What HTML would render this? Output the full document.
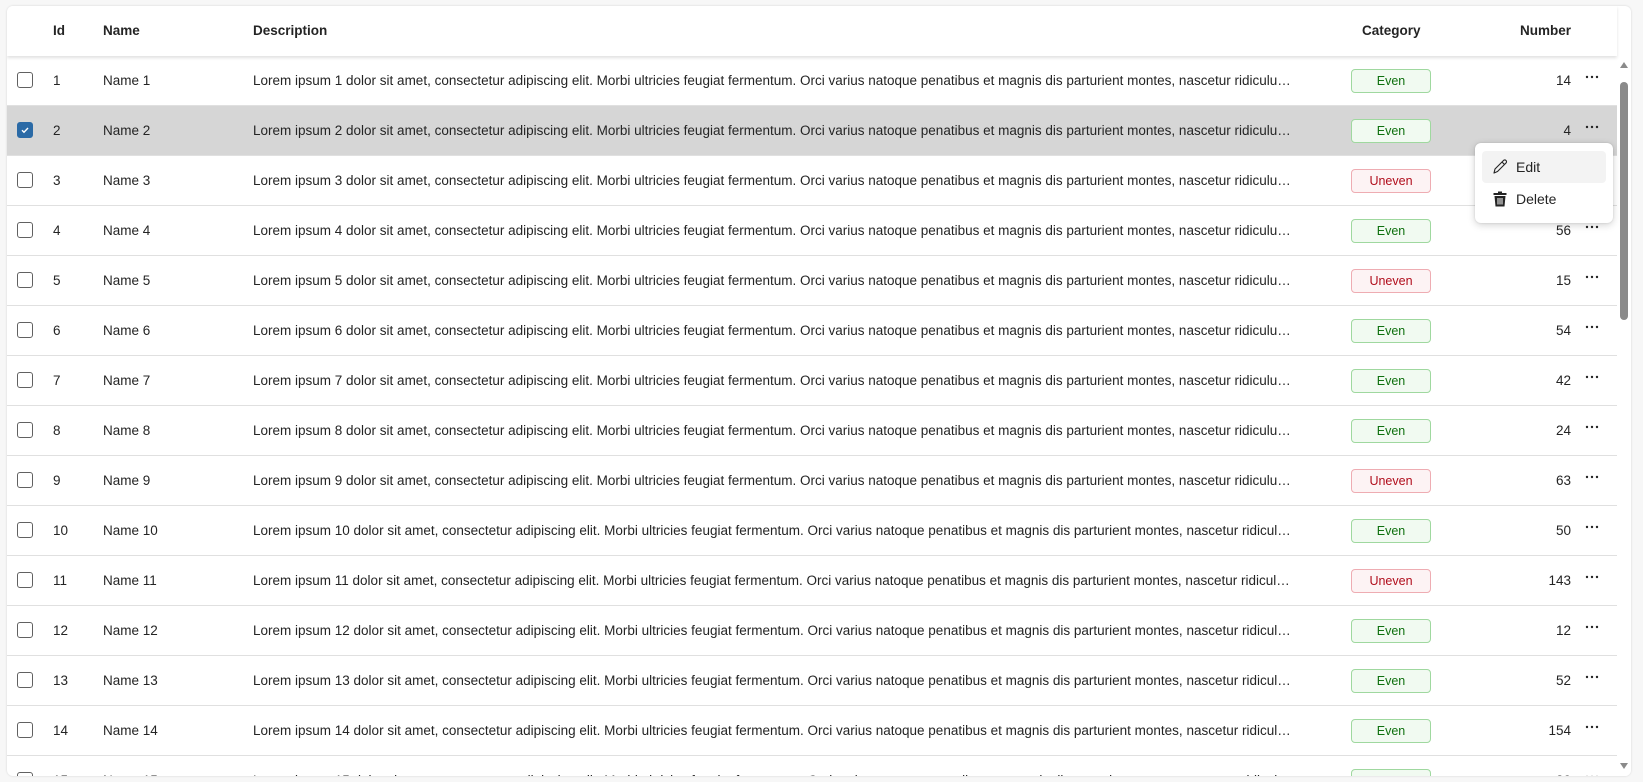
<!DOCTYPE html>
<html><head><style>
*{box-sizing:border-box;margin:0;padding:0}
body{width:1643px;height:782px;background:#f7f7f7;font-family:"Liberation Sans",sans-serif;font-size:13.5px;color:#242424;overflow:hidden;position:relative}
.card{position:absolute;left:7px;top:6px;width:1624px;height:770px;background:#fff;border-radius:6px;box-shadow:0 0 2px rgba(0,0,0,.15);overflow:hidden}
.hdr{position:absolute;left:0;top:0;width:1610px;height:50px;font-weight:bold;box-shadow:0 2px 3px rgba(0,0,0,.12);background:#fff;z-index:2}
.hdr span,.row span{position:absolute;top:0;white-space:nowrap}
.hdr span{line-height:50px}
.row{position:absolute;left:0;width:1610px;height:50px;border-bottom:1px solid #e0e0e0;line-height:49px}
.row.sel{background:#d6d6d6}
.cb{position:absolute;left:10px;top:16px;width:16px;height:16px;border:1px solid #616161;border-radius:3px;background:#fff}
.cb svg{display:block;position:absolute;left:0;top:0}
.sel .cb{background:#2b6aa6;border-color:#2b6aa6}
.desc{left:246px;width:1040px;overflow:hidden;text-overflow:ellipsis}
.badge{position:absolute;left:1344px;top:13px;width:80px;height:24px;border-radius:4px;line-height:22px;text-align:center;font-size:12.5px}
.even{background:#f1faf1;border:1px solid #9fd89f;color:#0e700e}
.uneven{background:#fdf3f4;border:1px solid #eeacb2;color:#b10e1c}
.num{right:46px;text-align:right}
.dots{position:absolute;left:1578px;top:19px;display:block}
.sb{position:absolute;left:1610px;top:50px;width:14px;height:720px;background:#fff}
.thumb{position:absolute;left:3px;top:26px;width:8px;height:238px;background:#8a8a8a;border-radius:4px}
.menu{position:absolute;left:1475px;top:143px;width:138px;height:80px;background:#fff;border-radius:6px;box-shadow:0 2px 8px rgba(0,0,0,.18),0 0 2px rgba(0,0,0,.12);z-index:5}
.mi{position:absolute;left:7px;width:124px;height:32px;border-radius:4px;line-height:32px;padding-left:34px;font-size:14px}
.mi svg{position:absolute;left:9px;top:7px}
</style></head><body>
<div class="card">
<div class="hdr"><span style="left:46px">Id</span><span style="left:96px">Name</span><span style="left:246px">Description</span><span style="left:1355px">Category</span><span style="right:46px">Number</span></div>
<div id="rows"></div>
<div class="sb"><svg style="position:absolute;left:2px;top:5px" width="10" height="8"><path d="M1 7L5 1L9 7Z" fill="#8a8a8a"/></svg><div class="thumb"></div><svg style="position:absolute;left:2px;top:706px" width="10" height="8"><path d="M1 1L5 7L9 1Z" fill="#8a8a8a"/></svg></div>
</div>
<div class="menu">
<div class="mi" style="top:8px;background:#f3f3f3"><svg width="18" height="18" viewBox="0 0 18 18"><path d="M3 15L4 11L12.5 2.5A1.6 1.6 0 0 1 15 5L6.5 13.5Z M11 4L13.8 6.8" fill="none" stroke="#242424" stroke-width="1.1" stroke-linejoin="round"/></svg>Edit</div>
<div class="mi" style="top:40px"><svg width="18" height="18" viewBox="0 0 18 18"><path d="M7 1.5h4v1.5h4.5v2h-13v-2H7z M3.5 6h11l-1 10.5h-9z" fill="#242424"/><path d="M7 8v6.5M9 8v6.5M11 8v6.5" stroke="#fff" stroke-width="1"/></svg>Delete</div>
</div>
<script>
var nums=[14,4,71,56,15,54,42,24,63,50,143,12,52,154,30],cat=[1,1,0,1,0,1,1,1,0,1,0,1,1,1,1],h='';
for(var i=0;i<15;i++){var n=i+1,t=50+i*50;
h+='<div class="row'+(n==2?' sel':'')+'" style="top:'+t+'px"><div class="cb">'+(n==2?'<svg width="14" height="14" viewBox="0 0 14 14"><path d="M4 7.2L6 9.2L10 5" fill="none" stroke="#fff" stroke-width="1.4"/></svg>':'')+'</div><span style="left:46px">'+n+'</span><span style="left:96px">Name '+n+'</span><span class="desc">Lorem ipsum '+n+' dolor sit amet, consectetur adipiscing elit. Morbi ultricies feugiat fermentum. Orci varius natoque penatibus et magnis dis parturient montes, nascetur ridiculus mus.</span><div class="badge '+(cat[i]?'even':'uneven')+'">'+(cat[i]?'Even':'Uneven')+'</div><span class="num">'+(n==3?'':nums[i])+'</span><svg class="dots" width="14" height="4"><circle cx="2" cy="2" r="1.2" fill="#242424"/><circle cx="7" cy="2" r="1.2" fill="#242424"/><circle cx="12" cy="2" r="1.2" fill="#242424"/></svg></div>';}
document.getElementById('rows').innerHTML=h;
</script>
</body></html>
